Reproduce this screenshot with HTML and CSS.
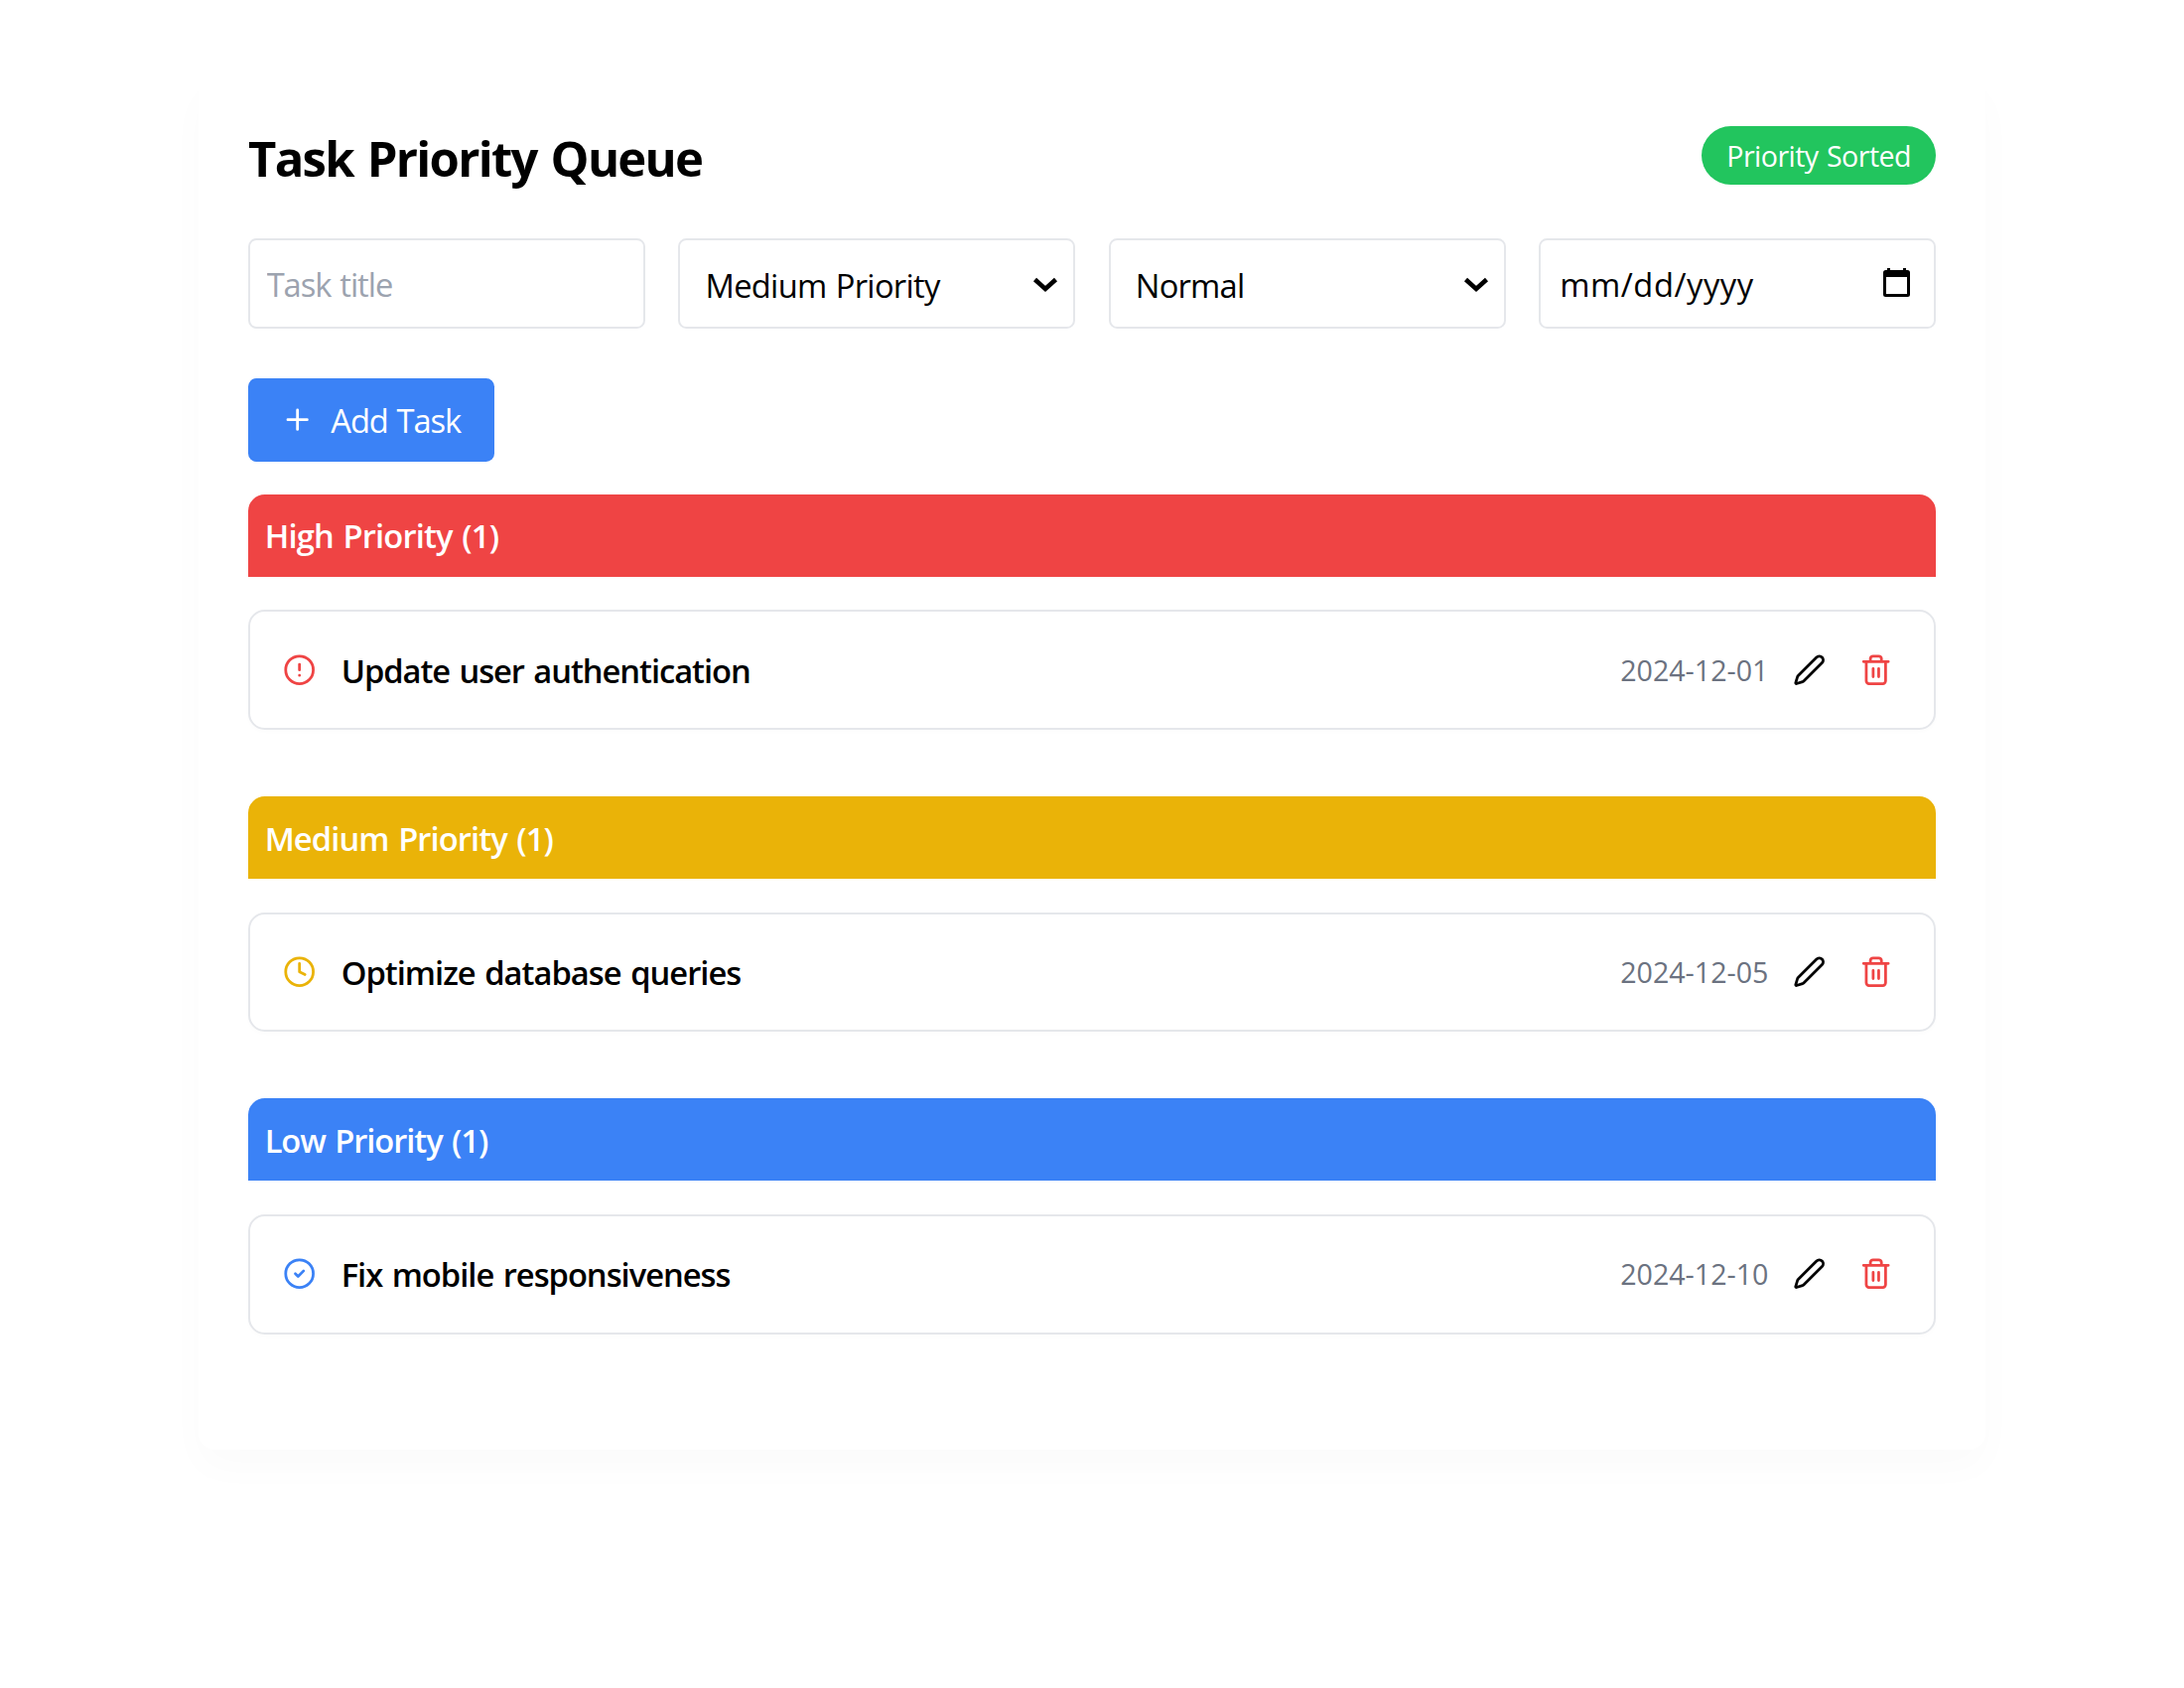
FILE: index.html
```html
<!DOCTYPE html>
<html lang="en">
<head>
<meta charset="utf-8">
<title>Task Priority Queue</title>
<link rel="stylesheet" href="styles.css">
</head>
<body>
<svg class="sprite" aria-hidden="true">
  <symbol id="pencil" viewBox="0 0 24 24"><path d="M21.174 6.812a1 1 0 0 0-3.986-3.987L3.842 16.174a2 2 0 0 0-.5.83l-1.321 4.352a.5.5 0 0 0 .623.622l4.353-1.32a2 2 0 0 0 .83-.497z"/></symbol>
  <symbol id="trash" viewBox="0 0 24 24"><path d="M3 6h18M19 6v14a2 2 0 0 1-2 2H7a2 2 0 0 1-2-2V6M8 6V4a2 2 0 0 1 2-2h4a2 2 0 0 1 2 2v2M10 11v6M14 11v6"/></symbol>
</svg>
<main class="panel">
  <header class="panel-header">
    <h1 class="title">Task Priority Queue</h1>
    <span class="badge">Priority Sorted</span>
  </header>

  <form class="form">
    <input class="field field-title" type="text" placeholder="Task title">
    <div class="field field-select">
      <span class="value value-priority">Medium Priority</span>
      <svg class="chevron" viewBox="0 0 28 18"><path d="M3.5 3.5 14 13 24.5 3.5"/></svg>
    </div>
    <div class="field field-select">
      <span class="value value-status">Normal</span>
      <svg class="chevron" viewBox="0 0 28 18"><path d="M3.5 3.5 14 13 24.5 3.5"/></svg>
    </div>
    <div class="field field-date">
      <span class="value-date">mm/dd/yyyy</span>
      <svg class="calendar" viewBox="0 0 27 29"><path fill-rule="evenodd" d="M4 0h3v2h13V0h3v2h1.500a2.500 2.500 0 0 1 2.500 2.500v22a2.500 2.500 0 0 1-2.500 2.500h-22A2.500 2.500 0 0 1 0 26.500v-22A2.500 2.500 0 0 1 2.500 2H4zM3 9v17h21V9z"/></svg>
    </div>
  </form>

  <button class="add" type="button">
    <svg class="icon" viewBox="0 0 24 24"><path d="M5 12h14M12 5v14"/></svg>
    <span class="add-label">Add Task</span>
  </button>

  <section class="group">
    <h2 class="group-title high">High Priority (1)</h2>
    <article class="task">
      <svg class="icon icon-high" viewBox="0 0 24 24"><circle cx="12" cy="12" r="10"/><path d="M12 8v4M12 16h.01"/></svg>
      <h3 class="name name-high">Update user authentication</h3>
      <time class="date">2024-12-01</time>
      <button class="action" type="button" aria-label="Edit"><svg class="icon"><use href="#pencil"/></svg></button>
      <button class="action remove" type="button" aria-label="Delete"><svg class="icon"><use href="#trash"/></svg></button>
    </article>
  </section>

  <section class="group">
    <h2 class="group-title medium">Medium Priority (1)</h2>
    <article class="task">
      <svg class="icon icon-medium" viewBox="0 0 24 24"><circle cx="12" cy="12" r="10"/><path d="M12 6v6l4 2"/></svg>
      <h3 class="name name-medium">Optimize database queries</h3>
      <time class="date">2024-12-05</time>
      <button class="action" type="button" aria-label="Edit"><svg class="icon"><use href="#pencil"/></svg></button>
      <button class="action remove" type="button" aria-label="Delete"><svg class="icon"><use href="#trash"/></svg></button>
    </article>
  </section>

  <section class="group">
    <h2 class="group-title low">Low Priority (1)</h2>
    <article class="task">
      <svg class="icon icon-low" viewBox="0 0 24 24"><circle cx="12" cy="12" r="10"/><path d="m9 12 2 2 4-4"/></svg>
      <h3 class="name name-low">Fix mobile responsiveness</h3>
      <time class="date">2024-12-10</time>
      <button class="action" type="button" aria-label="Edit"><svg class="icon"><use href="#pencil"/></svg></button>
      <button class="action remove" type="button" aria-label="Delete"><svg class="icon"><use href="#trash"/></svg></button>
    </article>
  </section>
</main>
</body>
</html>
```
FILE: styles.css
```css
*, *::before, *::after { box-sizing: border-box; }

body {
  margin: 0;
  padding: 77.2px 200px;
  background: #fff;
  color: #000;
  font-family: "Open Sans", "Noto Sans", sans-serif;
  font-size: 32.7px;
  line-height: 50px;
}

h1, h2, h3 { margin: 0; }
button, input { font: inherit; }
.sprite { display: none; }

.panel {
  padding: 50px;
  border-radius: 16.67px;
  background: #fff;
  box-shadow: 0 18px 40px rgba(0, 0, 0, 0.018);
}

.panel-header {
  display: flex;
  align-items: flex-start;
  justify-content: space-between;
  margin-bottom: 48.7px;
}
.title {
  font-size: 49px;
  font-weight: 700;
  line-height: 64.3px;
  letter-spacing: -1.73px;
  word-spacing: 3px;
}
.badge {
  padding: 8.33px 25px;
  border-radius: 30px;
  background: #22c55e;
  color: #fff;
  font-size: 28.6px;
  line-height: 41.67px;
  letter-spacing: -0.55px;
  word-spacing: 1.5px;
}

.form {
  display: grid;
  grid-template-columns: repeat(4, 1fr);
  gap: 33.33px;
  margin-bottom: 50px;
}
.field {
  display: flex;
  align-items: center;
  justify-content: space-between;
  width: 100%;
  height: 91px;
  border: 2px solid #e5e7eb;
  border-radius: 8.33px;
  background: #fff;
}
.field-title { padding: 2px 16.67px 0; letter-spacing: -1.05px; word-spacing: 1.5px; }
.field-title::placeholder { color: #9ca3af; opacity: 1; }
.field-select { padding: 0 14px 0 25.2px; }
.value { padding-top: 5.5px; }
.value-priority { letter-spacing: -0.72px; word-spacing: 1.5px; }
.value-status { letter-spacing: -0.8px; }
.value-date { padding-top: 2px; letter-spacing: 0.55px; }
.chevron {
  width: 28px;
  height: 18px;
  margin-top: 3px;
  fill: none;
  stroke: #000;
  stroke-width: 4.6;
}
.field-date { padding: 0 24px 0 19.2px; }
.calendar { width: 27px; height: 29px; margin-bottom: 1.5px; }

.add {
  display: flex;
  align-items: center;
  gap: 16.67px;
  width: 248px;
  height: 83.33px;
  margin: 0 0 33.33px;
  padding: 0 33.33px;
  border: 0;
  border-radius: 8.33px;
  background: #3b82f6;
  color: #fff;
  letter-spacing: -1.1px;
  word-spacing: 1.5px;
  white-space: nowrap;
}
.add-label { padding-top: 2px; }

.icon {
  flex: none;
  display: block;
  width: 33.33px;
  height: 33.33px;
  fill: none;
  stroke: currentColor;
  stroke-width: 2;
  stroke-linecap: round;
  stroke-linejoin: round;
}
.icon-high, .remove { color: #ef4444; }
.icon-medium { color: #eab308; }
.icon-low { color: #3b82f6; }

.group { margin-bottom: 66.67px; }
.group:last-child { padding-bottom: 0.1px; }
.group-title {
  margin-bottom: 33.33px;
  padding: 17.67px 16.67px 15.67px;
  border-radius: 16.67px 16.67px 0 0;
  color: #fff;
  font-size: inherit;
  font-weight: 600;
  word-spacing: 2px;
}
.high { background: #ef4444; letter-spacing: -0.84px; }
.medium { background: #eab308; letter-spacing: -0.91px; }
.low { background: #3b82f6; letter-spacing: -1.07px; }

.task {
  display: flex;
  align-items: center;
  height: 120.83px;
  padding: 0 33.33px;
  border: 2px solid #e5e7eb;
  border-radius: 16.67px;
  background: #fff;
  box-shadow: 0 2px 4px rgba(0, 0, 0, 0.015);
}
.name {
  flex: 1;
  margin-left: 25px;
  padding-top: 2px;
  font-size: inherit;
  font-weight: 600;
  word-spacing: 2px;
}
.name-high { letter-spacing: -1.05px; }
.name-medium { letter-spacing: -0.98px; }
.name-low { letter-spacing: -1px; }
.date {
  color: #6b7280;
  font-size: 28.6px;
  letter-spacing: 0;
}
.action {
  margin-left: 16.67px;
  padding: 8.33px;
  border: 0;
  background: none;
  color: #000;
}
.action.remove { color: #ef4444; }
```
